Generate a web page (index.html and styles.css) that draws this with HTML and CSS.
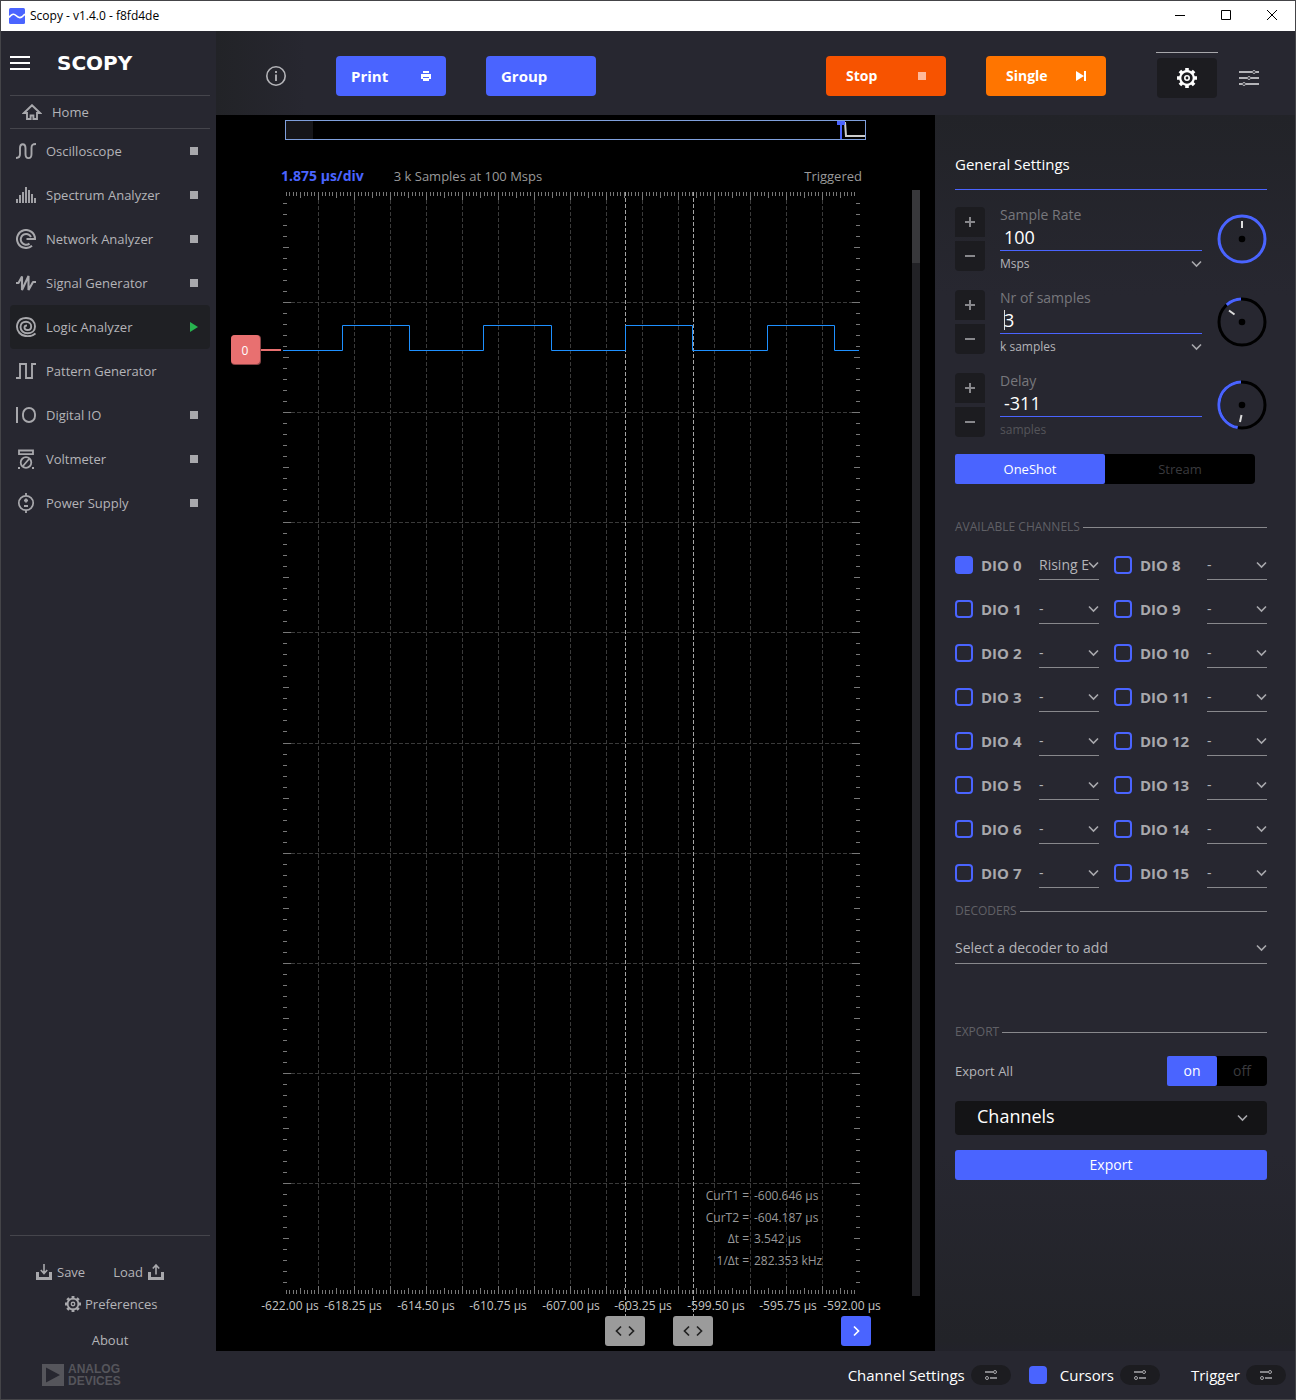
FILE: index.html
```html
<!DOCTYPE html>
<html lang="en">
<head>
<meta charset="utf-8">
<title>Scopy - v1.4.0 - f8fd4de</title>
<link rel="stylesheet" href="styles.css">
</head>
<body>
<svg class="defs" aria-hidden="true">
  <symbol id="chevron" viewBox="0 0 12 8"><path d="M2 1.500 6.500 6 11 1.500" fill="none" stroke="currentColor" stroke-width="1.600"/></symbol>
  <symbol id="gear" viewBox="0 0 20 20">
    <path d="M10 0v4M10 16v4M0 10h4M16 10h4M2.900 2.900l2.800 2.800M14.300 14.300l2.800 2.800M17.100 2.900l-2.800 2.800M5.700 14.300l-2.800 2.800" stroke="currentColor" stroke-width="3.600"/>
    <circle cx="10" cy="10" r="6.800" fill="none" stroke="currentColor" stroke-width="2.200"/>
    <circle cx="10" cy="10" r="2.200" fill="none" stroke="currentColor" stroke-width="1.600"/>
  </symbol>
  <symbol id="adjust" viewBox="0 0 14 10">
    <path d="M1 2h8M6 8h7" stroke="currentColor" stroke-width="1.600"/>
    <circle cx="11" cy="2" r="1.500" fill="none" stroke="currentColor"/>
    <circle cx="3" cy="8" r="1.500" fill="none" stroke="currentColor"/>
  </symbol>
</svg>

<header class="titlebar">
  <svg class="app-icon" viewBox="0 0 16 16"><rect width="16" height="16" rx="1.500" fill="#4a64ff"/><path d="M0 9.500C2 6.500 4.500 5 7 7.500s5 3.500 9-1.500" fill="none" stroke="#fff" stroke-width="1.700"/></svg>
  <span class="window-title">Scopy - v1.4.0 - f8fd4de</span>
  <div class="window-buttons">
    <button aria-label="Minimize"><svg viewBox="0 0 12 12"><path d="M1 5.500h10" stroke="#000"/></svg></button>
    <button aria-label="Maximize"><svg viewBox="0 0 12 12"><path d="M1.500 .5h9v9h-9z" fill="none" stroke="#000"/></svg></button>
    <button aria-label="Close"><svg viewBox="0 0 12 12"><path d="M1 0l10 10M11 0 1 10" stroke="#000"/></svg></button>
  </div>
</header>

<div class="app">
  <aside class="sidebar">
    <div class="brand">
      <button class="burger" aria-label="Menu"><svg viewBox="0 0 20 14"><path d="M0 1h20M0 7h20M0 13h20" stroke="#fff" stroke-width="2"/></svg></button>
      <span class="wordmark">SCOPY</span>
    </div>
    <a class="home" href="#home">
      <svg class="icon" viewBox="0 0 20 16"><path d="M10 1.200 2 9h3v6h3.600v-3.500h2.800V15H15V9h3z" fill="none" stroke="currentColor" stroke-width="1.900"/></svg>Home</a>
    <nav class="tools">
      <a href="#osc"><svg class="icon" viewBox="0 0 20 20"><path d="M0 17c3 0 4-1 4-4V7c0-5 5.500-5 5.500 0v6c0 5.500 6 5.500 6 0V7c0-3 1-4 4.500-4" fill="none" stroke="currentColor" stroke-width="1.900"/></svg><span>Oscilloscope</span><i class="state"></i></a>
      <a href="#spec"><svg class="icon" viewBox="0 0 20 20"><path d="M1 18v-4M4 18v-8M7 18V7M10 18V2M13 18V5M16 18v-9M19 18v-5" fill="none" stroke="currentColor" stroke-width="1.900"/></svg><span>Spectrum Analyzer</span><i class="state"></i></a>
      <a href="#net"><svg class="icon" viewBox="0 0 20 20"><path d="M16 16.700A9 9 0 1 1 19 10H10.500M13.500 14.600A5.400 5.400 0 1 1 15 8" fill="none" stroke="currentColor" stroke-width="2"/></svg><span>Network Analyzer</span><i class="state"></i></a>
      <a href="#sig"><svg class="icon" viewBox="0 0 20 20"><path d="M0 10h2.500L6 3.500V17L12.500 3v14L17 9h3" fill="none" stroke="currentColor" stroke-width="2.100" stroke-linejoin="bevel"/></svg><span>Signal Generator</span><i class="state"></i></a>
      <a class="active" href="#logic"><svg class="icon" viewBox="0 0 20 20"><path d="M19.500 16.500C15 20.500 7 20 3.500 16-1 11 .5 1 10 1c6 0 9 4 9 8.500s-3.500 6.800-7.500 6.800S4.500 13.500 4.500 10 7 4.800 10 4.800s5.200 2 5.200 4.600-1.700 3.600-3.700 3.600-3-1-3-2.500 1-2 2.500-2" fill="none" stroke="currentColor" stroke-width="1.900"/></svg><span>Logic Analyzer</span><i class="state running"></i></a>
      <a href="#pat"><svg class="icon" viewBox="0 0 20 20"><path d="M0 17h4V3h6v14h6V3h4" fill="none" stroke="currentColor" stroke-width="1.900"/></svg><span>Pattern Generator</span></a>
      <a href="#dio"><svg class="icon" viewBox="0 0 20 20"><path d="M1 2v16" stroke="currentColor" stroke-width="2"/><rect x="7" y="3" width="12" height="14" rx="6" fill="none" stroke="currentColor" stroke-width="1.900"/></svg><span>Digital IO</span><i class="state"></i></a>
      <a href="#volt"><svg class="icon" viewBox="0 0 20 20"><path d="M3 1.500h14v3.600H3zM7 17l6-7" fill="none" stroke="currentColor" stroke-width="1.800"/><circle cx="10" cy="13.500" r="5.300" fill="none" stroke="currentColor" stroke-width="1.800"/><path d="M2 18h2v2H2zM16 18h2v2h-2z" fill="currentColor"/></svg><span>Voltmeter</span><i class="state"></i></a>
      <a href="#pow"><svg class="icon" viewBox="0 0 20 20"><circle cx="10" cy="10" r="7.200" fill="none" stroke="currentColor" stroke-width="1.700"/><path d="M10 0v3M10 17v3M10 5.500v4M8 7.500h4M8 13h4" stroke="currentColor" stroke-width="1.800"/></svg><span>Power Supply</span><i class="state"></i></a>
    </nav>
    <footer class="side-footer">
      <div class="file-row">
        <a href="#save"><svg viewBox="0 0 16 16"><path d="M1.500 8v6.500h13V8" fill="none" stroke="currentColor" stroke-width="3"/><path d="M8 0v9M4.800 6 8 9.500 11.200 6" fill="none" stroke="currentColor" stroke-width="1.600"/></svg>Save</a>
        <a href="#load">Load<svg viewBox="0 0 16 16"><path d="M1.500 8v6.500h13V8" fill="none" stroke="currentColor" stroke-width="3"/><path d="M8 10.500V1.500M4.800 4.500 8 1l3.200 3.500" fill="none" stroke="currentColor" stroke-width="1.600"/></svg></a>
      </div>
      <a class="prefs" href="#preferences"><svg><use href="#gear"/></svg>Preferences</a>
      <a class="about" href="#about">About</a>
      <div class="adi">
        <svg viewBox="0 0 22 22"><path d="M0 0h22v22H0zM4 3.500v15L18 11z" fill="currentColor" fill-rule="evenodd"/></svg>
        <span>ANALOG<br>DEVICES</span>
      </div>
    </footer>
  </aside>

  <main class="workspace">
    <div class="topbar">
      <button class="info" aria-label="Info"><svg viewBox="0 0 20 20"><circle cx="10" cy="10" r="9.200" fill="none" stroke="currentColor" stroke-width="1.600"/><path d="M10 5v2M10 8.500V15" stroke="currentColor" stroke-width="1.800"/></svg></button>
      <button class="action blue">Print<svg viewBox="0 0 12 12"><path d="M3 1h6v2H3zM1 4h10v5H9V7H3v2H1zM3 8h6v3H3z" fill="#fff"/></svg></button>
      <button class="action blue">Group</button>
      <div class="run">
        <button class="action stop">Stop<svg viewBox="0 0 12 12"><path d="M2 2h8v8H2z" fill="#ffb99a"/></svg></button>
        <button class="action single">Single<svg viewBox="0 0 12 12"><path d="M0 1l8 5-8 5zM8 1h2v10H8z" fill="#fff"/></svg></button>
      </div>
      <div class="gear-tab"><button aria-label="General settings"><svg><use href="#gear"/></svg></button></div>
      <button class="sliders" aria-label="Channel list"><svg viewBox="0 0 20 20"><path d="M0 4h13M17 4h3M0 10h8M12 10h8M0 16h3M7 16h13" stroke="currentColor" stroke-width="1.800"/><g fill="none" stroke="currentColor"><circle cx="15" cy="4" r="1.500"/><circle cx="10" cy="10" r="1.500"/><circle cx="5" cy="16" r="1.500"/></g></svg></button>
    </div>

    <div class="middle">
      <section class="plot">
        <svg class="overview" viewBox="285 120 581 20">
          <rect x="286" y="121" width="27" height="18" fill="#16161a"/>
          <rect x="285.500" y="120.500" width="580" height="19" fill="none" stroke="#7f9fdc"/>
          <path d="M845 122l1 14h19" fill="none" stroke="#ccc" stroke-width="2"/>
          <path d="M837 121h8v4h-3v14h-2v-14h-3z" fill="#4a64ff"/>
        </svg>
        <div class="plot-info">
          <strong>1.875 µs/div</strong><span>3 k Samples at 100 Msps</span><span class="trig">Triggered</span>
        </div>
        <svg class="chart" viewBox="216 190 719 1126">
          <g id="grid"></g>
          <g class="axis" id="axis"></g>
          <rect x="912" y="190" width="8" height="1106" fill="#222226"/>
          <rect x="912" y="190" width="8" height="73" fill="#38383b"/>
          <path class="cursor" d="M625.500 192V1316M693.500 192V1316"/>
          <path class="signal" d="M283 350.500H342.500V325.500H409.500V350.500H483.500V325.500H551.500V350.500H625.500V325.500H692.500V350.500H767.500V325.500H834.500V350.500H859"/>
          <path d="M260 350h21" stroke="#e87070" stroke-width="2"/>
          <rect x="231" y="335" width="30" height="30" rx="4" fill="#8a4345"/>
          <rect x="231" y="335" width="29" height="29" rx="4" fill="#e87070"/>
          <text class="badge" x="245" y="355">0</text>
          <g class="readout end">
            <text x="749" y="1200">CurT1 =</text><text x="749" y="1222">CurT2 =</text><text x="749" y="1243">Δt =</text><text x="749" y="1265">1/Δt =</text>
          </g>
          <g class="readout">
            <text x="754" y="1200">-600.646 µs</text><text x="754" y="1222">-604.187 µs</text><text x="754" y="1243">3.542 µs</text><text x="754" y="1265">282.353 kHz</text>
          </g>
        </svg>
        <div class="handles">
          <button class="handle" aria-label="Cursor 1"><svg viewBox="0 0 20 12"><path d="M6 1.500 1.500 6 6 10.500M14 1.500 18.500 6 14 10.500" fill="none" stroke="#222" stroke-width="1.700"/></svg></button>
          <button class="handle" aria-label="Cursor 2"><svg viewBox="0 0 20 12"><path d="M6 1.500 1.500 6 6 10.500M14 1.500 18.500 6 14 10.500" fill="none" stroke="#222" stroke-width="1.700"/></svg></button>
          <button class="trigger-handle" aria-label="Trigger position"><svg viewBox="0 0 8 12"><path d="M2 1.500 6.500 6 2 10.500" fill="none" stroke="#fff" stroke-width="1.700"/></svg></button>
        </div>
      </section>

      <section class="panel">
        <h2>General Settings</h2>

        <div class="spin">
          <div class="steps"><button aria-label="Increase sample rate"><svg viewBox="0 0 10 10"><path d="M0 5h10M5 0v10"/></svg></button><button aria-label="Decrease sample rate"><svg viewBox="0 0 10 10"><path d="M0 5h10"/></svg></button></div>
          <div class="field">
            <label for="rate">Sample Rate</label>
            <input id="rate" type="text" value="100">
            <div class="drop unit"><select aria-label="Sample rate unit"><option>Msps</option></select><svg><use href="#chevron"/></svg></div>
          </div>
          <svg class="dial" viewBox="0 0 50 50"><circle class="ring on" cx="25" cy="25" r="23"/><circle cx="25" cy="25" r="3.300"/><path class="hand" d="M25 7v7"/></svg>
        </div>
        <div class="spin">
          <div class="steps"><button aria-label="Increase samples"><svg viewBox="0 0 10 10"><path d="M0 5h10M5 0v10"/></svg></button><button aria-label="Decrease samples"><svg viewBox="0 0 10 10"><path d="M0 5h10"/></svg></button></div>
          <div class="field editing">
            <label for="count">Nr of samples</label>
            <input id="count" type="text" value="3">
            <div class="drop unit"><select aria-label="Samples unit"><option>k samples</option></select><svg><use href="#chevron"/></svg></div>
          </div>
          <svg class="dial" viewBox="0 0 50 50"><circle class="ring" cx="25" cy="25" r="23"/><path class="ring on" d="M9.700 7.800A23 23 0 0 1 24 2"/><circle cx="25" cy="25" r="3.300"/><path class="hand" d="M12 13.500l5.500 4"/></svg>
        </div>
        <div class="spin">
          <div class="steps"><button aria-label="Increase delay"><svg viewBox="0 0 10 10"><path d="M0 5h10M5 0v10"/></svg></button><button aria-label="Decrease delay"><svg viewBox="0 0 10 10"><path d="M0 5h10"/></svg></button></div>
          <div class="field">
            <label for="delay">Delay</label>
            <input id="delay" type="text" value="-311">
            <div class="unit muted">samples</div>
          </div>
          <svg class="dial" viewBox="0 0 50 50"><circle class="ring" cx="25" cy="25" r="23"/><path class="ring on" d="M20.700 47.600A23 23 0 0 1 24 2"/><circle cx="25" cy="25" r="3.300"/><path class="hand" d="M24.500 35l-1.500 7"/></svg>
        </div>

        <div class="toggle mode"><button class="on">OneShot</button><button>Stream</button></div>

        <h3>AVAILABLE CHANNELS</h3>
        <div class="channels" id="channels"></div>

        <h3>DECODERS</h3>
        <div class="drop decoder"><select aria-label="Decoder"><option>Select a decoder to add</option></select><svg><use href="#chevron"/></svg></div>

        <h3>EXPORT</h3>
        <div class="export-row"><span>Export All</span><div class="toggle"><button class="on">on</button><button>off</button></div></div>
        <div class="drop boxed"><select aria-label="Export source"><option>Channels</option></select><svg><use href="#chevron"/></svg></div>
        <button class="export">Export</button>
      </section>
    </div>

    <div class="bottombar">
      <span>Channel Settings</span><button class="pill" aria-label="Channel settings"><svg><use href="#adjust"/></svg></button>
      <input class="box" type="checkbox" id="cursors" checked><label for="cursors">Cursors</label><button class="pill" aria-label="Cursor settings"><svg><use href="#adjust"/></svg></button>
      <span class="trigger">Trigger</span><button class="pill" aria-label="Trigger settings"><svg><use href="#adjust"/></svg></button>
    </div>
  </main>
</div>
<script src="scopy.js"></script>
</body>
</html>
```
FILE: scopy.js
```js
// Plot area edges, grid origin and grid spacing.
const plot = { left: 283, right: 860, top: 192, bottom: 1294 };
const col = { first: 318, step: 36, count: 15 };
const row = { first: 302, step: 110.125, count: 9 };

function path(cls, d) {
  return `<path class="${cls}" d="${d}"/>`;
}

function tickLength(i) {
  if (i % 10 === 0) return 8;
  return i % 5 === 0 ? 6 : 4;
}

function drawGrid() {
  let lines = '';
  let ticks = '';
  for (let i = 0; i < col.count; i++) {
    lines += `M${col.first + i * col.step + 0.5} 200V1287`;
  }
  for (let i = 0; i < row.count; i++) {
    lines += `M291 ${Math.round(row.first + i * row.step) + 0.5}H853`;
  }
  for (let i = -9; i < col.count * 10; i++) {
    const x = Math.round(col.first + i * col.step / 10) + 0.5;
    if (x > 856) break;
    const n = tickLength(i);
    ticks += `M${x} ${plot.top}v${n}M${x} ${plot.bottom}v${-n}`;
  }
  for (let i = -9; i < row.count * 10; i++) {
    const y = Math.round(row.first + i * row.step / 10) + 0.5;
    const n = tickLength(i);
    ticks += `M${plot.left} ${y}h${n}M${plot.right} ${y}h${-n}`;
  }
  document.getElementById('grid').innerHTML = path('grid', lines) + path('ticks', ticks);
}

function drawAxis() {
  const labels = [
    ['-622.00', 290], ['-618.25', 353], ['-614.50', 426], ['-610.75', 498], ['-607.00', 571],
    ['-603.25', 643], ['-599.50', 716], ['-595.75', 788], ['-592.00', 852]
  ];
  document.getElementById('axis').innerHTML = labels
    .map(([t, x]) => `<text x="${x}" y="1310">${t} µs</text>`).join('');
}

function channel(n) {
  const trigger = n === 0 ? 'Rising Edge' : '-';
  return `<div class="channel">
    <input class="box" type="checkbox" id="dio${n}"${n === 0 ? ' checked' : ''}>
    <label for="dio${n}">DIO ${n}</label>
    <div class="drop"><select aria-label="DIO ${n} trigger"><option>${trigger}</option></select>
    <svg><use href="#chevron"/></svg></div></div>`;
}

drawGrid();
drawAxis();
document.getElementById('channels').innerHTML = Array.from({ length: 16 }, (_, i) => channel(i)).join('');
```
FILE: styles.css
```css
* { box-sizing: border-box; }
html { height: 100%; }
body {
  margin: 0;
  min-height: 100%;
  display: flex;
  flex-direction: column;
  border: 1px solid #444448;
  background: #272730;
  color: #b4b4b8;
  font: 13px/20px "Open Sans", "Noto Sans", sans-serif;
}
button, input, select { font: inherit; color: inherit; margin: 0; padding: 0; border: 0; background: none; border-radius: 0; outline: 0; }
a { color: inherit; text-decoration: none; }
svg { display: block; flex: none; }
.defs { position: absolute; width: 0; height: 0; }

/* Window title bar */
.titlebar { display: flex; align-items: center; height: 30px; padding-left: 8px; background: #fff; color: #000; font-size: 12px; }
.app-icon { width: 16px; height: 16px; margin-right: 5px; }
.window-buttons { display: flex; margin-left: auto; }
.window-buttons button { width: 46px; height: 30px; display: grid; place-items: center; }
.window-buttons svg { width: 12px; height: 12px; }

.app { flex: 1; display: flex; }

/* Sidebar */
.sidebar { width: 215px; flex: none; display: flex; flex-direction: column; padding: 0 6px 0 9px; }
.brand { display: flex; align-items: center; height: 64px; gap: 27px; }
.burger svg { width: 20px; height: 14px; }
.wordmark { color: #fff; font: bold 20px/24px "DejaVu Sans", sans-serif; }
.home { display: flex; align-items: center; gap: 10px; height: 34px; padding-left: 12px; border: solid #45454c; border-width: 1px 0; }
.home .icon { width: 20px; height: 16px; }
.icon { color: #a8a8ac; }
.tools a { display: flex; align-items: center; height: 44px; gap: 10px; padding: 0 12px 0 6px; border-radius: 4px; }
.tools .icon { width: 20px; height: 20px; }
.tools .active { background: #1f2024; }
.state { width: 8px; height: 8px; margin-left: auto; background: #a8a8ac; }
.running { background: #27b34f; clip-path: polygon(0 0, 100% 50%, 0 100%); height: 10px; }
.side-footer { margin-top: auto; padding: 26px 0 12px; border-top: 1px solid #45454c; }
.file-row { display: flex; gap: 28px; padding-left: 26px; }
.side-footer a { display: flex; align-items: center; gap: 5px; }
.side-footer a svg { width: 16px; height: 16px; color: #a8a8ac; }
.side-footer .prefs { margin-top: 12px; padding-left: 55px; gap: 4px; }
.side-footer .about { margin-top: 16px; justify-content: center; }
.adi { display: flex; align-items: center; gap: 4px; margin-top: 13px; padding-left: 32px; color: #55555b; font: bold 12px/12px "Liberation Sans", Arial, sans-serif; }
.adi svg { width: 22px; height: 22px; }

/* Top bar */
.workspace { flex: 1; min-width: 0; display: flex; flex-direction: column; }
.topbar { display: flex; align-items: center; height: 84px; padding: 6px 36px 0 50px; background: linear-gradient(90deg, #222327, #272730 90px); }
.info { margin-right: 50px; }
.info svg { width: 20px; height: 20px; }
.action { display: flex; align-items: center; justify-content: space-between; width: 110px; height: 40px; padding: 0 14px 0 15px; border-radius: 4px; color: #fff; font-size: 14px; font-weight: 700; }
.action svg { width: 12px; height: 12px; }
.blue { background: #4a64ff; margin-right: 40px; font-size: 15px; }
.run { display: flex; gap: 40px; margin-left: auto; }
.run .action { width: 120px; padding: 0 18px 0 20px; }
.stop { background: #f75300; }
.single { background: #ff7500; }
.gear-tab { margin-left: 50px; margin-right: 21px; padding: 5px 1px 0; border-top: 1px solid #a8a8ac; align-self: flex-start; margin-top: 15px; }
.gear-tab button { display: grid; place-items: center; width: 60px; height: 40px; border-radius: 4px; background: #1c1c20; color: #fff; }
.gear-tab svg { width: 20px; height: 20px; }
.sliders { padding-top: 4px; }
.sliders svg { width: 20px; height: 20px; }

/* Plot */
.middle { flex: 1; display: flex; }
.plot { flex: 1; min-width: 0; padding: 5px 0; background: #000; }
.overview { width: auto; margin: 0 69px; }
.plot-info { display: flex; gap: 30px; align-items: center; height: 20px; margin: 26px 73px 4px 65px; color: #9a9a9a; font-size: 13px; }
.plot-info strong { color: #4a64ff; font-size: 14px; font-weight: 700; }
.plot-info .trig { margin-left: auto; }
.chart { width: 100%; font-size: 12px; }
.chart path { fill: none; }
.chart .grid { stroke: #3a3a3a; stroke-dasharray: 4 2; }
.chart .ticks { stroke: #777; }
.chart .cursor { stroke: #a4a4a4; stroke-dasharray: 4 2; }
.chart .signal { stroke: #1e90ff; }
.axis { fill: #c4c4c4; text-anchor: middle; }
.badge { fill: #fff; text-anchor: middle; }
.readout { fill: #999; }
.end { text-anchor: end; }
.handles { display: flex; margin: 0 64px 0 389px; gap: 28px; }
.handles button { display: grid; place-items: center; height: 30px; border-radius: 3px; }
.handle { width: 40px; background: #9b9b9b; }
.handle svg { width: 20px; height: 12px; }
.handles .trigger-handle { width: 30px; margin-left: auto; background: #4a64ff; }
.trigger-handle svg { width: 8px; height: 12px; }

/* Settings panel */
.panel { width: 360px; flex: none; padding: 36px 28px 0 20px; background: linear-gradient(#222328, #272730 180px, #272730 1040px, #222328 1225px, #22222a); }
h2 { margin: 0 0 17px; height: 39px; border-bottom: 1px solid #4a64ff; color: #fff; font-size: 15px; font-weight: 400; line-height: 26px; }
.spin { display: flex; height: 64px; margin-bottom: 19px; }
.steps { display: flex; flex-direction: column; gap: 4px; width: 30px; margin-right: 15px; }
.steps button { display: grid; place-items: center; height: 30px; background: #1c1c20; border-radius: 4px 4px 0 0; }
.steps button + button { border-radius: 0 0 4px 4px; }
.steps svg { width: 10px; height: 10px; stroke: #88888c; stroke-width: 2; }
.field { flex: 1; min-width: 0; margin-right: 15px; }
.field label { display: block; height: 17px; line-height: 16px; font-size: 14px; color: #77777c; }
.field input { display: block; width: 100%; height: 27px; padding-left: 4px; border-bottom: 1px solid #4a64ff; color: #fff; font-size: 18px; line-height: 24px; }
.editing input { background: linear-gradient(#ddd, #ddd) 4px 3px / 1px 20px no-repeat; }
.unit { height: 18px; margin-top: 4px; font-size: 12px; line-height: 18px; }
.muted { color: #55555a; }
.dial { width: 50px; height: 50px; margin-top: 7px; }
.ring { fill: none; stroke: #000; stroke-width: 3; }
.ring.on { stroke: #4a64ff; }
.hand { stroke: #ddd; stroke-width: 2; }

.drop { display: grid; align-items: center; }
.drop > * { grid-area: 1 / 1; }
.drop select { appearance: none; width: 100%; height: 100%; overflow: hidden; }
.drop svg { width: 12px; height: 8px; justify-self: end; pointer-events: none; color: #a8a8ac; }
.toggle { display: flex; width: 100px; height: 30px; background: #000; border-radius: 4px; }
.toggle button { flex: 1; color: #3a3a3e; font-size: 14px; }
.toggle .on { background: #4a64ff; color: #fff; border-radius: 2px; }
.mode { width: 300px; margin-top: -2px; }
.mode button { font-size: 13px; }

h3 { display: flex; align-items: center; gap: 3px; margin: 0; height: 18px; color: #606066; font-size: 12px; font-weight: 400; line-height: 18px; }
h3::after { content: ""; flex: 1; height: 1px; background: #88888c; }
.mode + h3 { margin-top: 34px; }

.channels { display: grid; grid-template-columns: 144px 153px; grid-template-rows: repeat(8, 44px); grid-auto-flow: column; justify-content: space-between; margin: 7px 0; }
.channel { display: flex; align-items: center; }
.box { appearance: none; width: 18px; height: 18px; flex: none; border: 2px solid #4a64ff; border-radius: 4px; }
.box:checked { background: #4a64ff; }
.channel label { margin-left: 8px; font-size: 15px; font-weight: 700; line-height: 20px; color: #a8a8ac; }
.channel .drop { width: 60px; height: 30px; margin-left: auto; border-bottom: 1px solid #88888c; }
.channel select { padding-right: 10px; font-size: 14px; }
.decoder { height: 32px; margin: 12px 0 59px; border-bottom: 1px solid #88888c; }
.decoder select { font-size: 14px; }
.export-row { display: flex; align-items: center; justify-content: space-between; margin: 15px 0; font-size: 13px; }
.boxed { height: 34px; padding: 0 19px 0 22px; background: #141416; border-radius: 4px; }
.boxed select { color: #fff; font-size: 18px; line-height: 24px; padding-bottom: 4px; }
.export { width: 100%; height: 30px; margin-top: 15px; background: #4a64ff; color: #fff; border-radius: 3px; font-size: 14px; }

/* Bottom bar */
.bottombar { display: flex; align-items: center; justify-content: flex-end; height: 48px; padding-right: 9px; color: #fff; font-size: 15px; }
.pill { display: grid; place-items: center; width: 40px; height: 20px; margin-left: 6px; border-radius: 10px; background: #1c1c20; color: #a8a8ac; }
.pill svg { width: 14px; height: 10px; }
.bottombar .box { margin: 0 13px 0 18px; }
.trigger { margin-left: 31px; }
```
